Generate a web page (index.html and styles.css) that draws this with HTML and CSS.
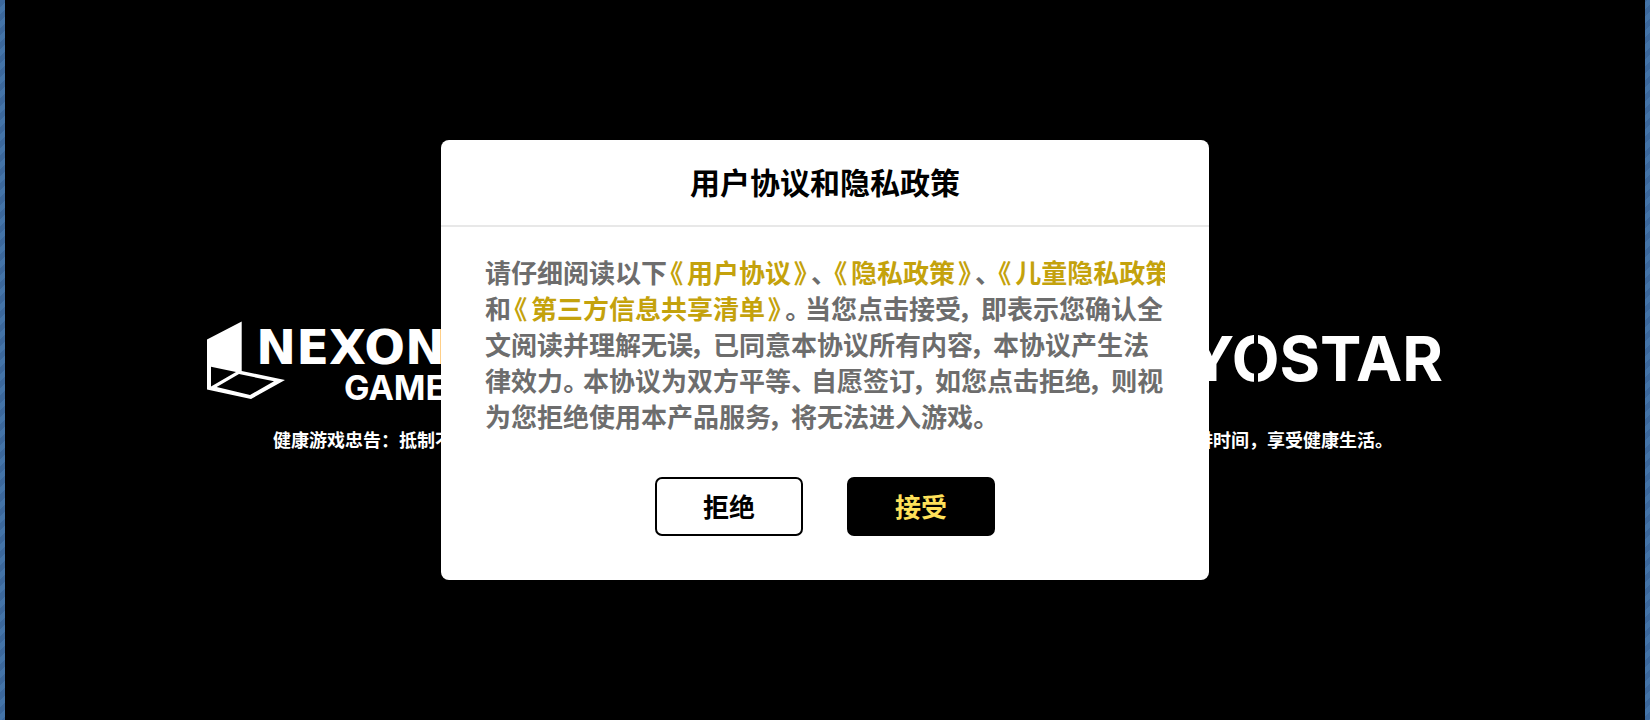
FILE: index.html
```html
<!DOCTYPE html>
<html lang="zh-CN">
<head>
	<meta charset="UTF-8">
	<title>用户协议和隐私政策</title>
	<link rel="stylesheet" href="styles.css">
</head>
<body>
	<main class="splash">
		<div class="brands">
			<svg class="brand-nexon" width="260" height="84" viewBox="0 0 260 84" role="img" aria-label="NEXON GAMES">
				<path fill-rule="evenodd" d="M0 19.5 L34.7 1.5 V51 L78 60 L44 79 L0 69.5 Z M4 46.7 V66.5 L29 52 Z M32 54 L9.7 67 L43 75 L67 61.3 Z"/>
				<text class="word-nexon" x="49" y="44">NEXON</text>
				<text class="word-games" x="137" y="80">GAMES</text>
			</svg>
			<svg class="brand-yostar" width="262" height="84" viewBox="0 0 262 84" role="img" aria-label="YOSTAR">
				<text class="word-yostar" x="262" y="61" text-anchor="end">YOSTAR</text>
				<!-- split in the top and bottom of the O -->
				<path class="cut" d="M75 12 V66"/>
			</svg>
		</div>
		<p class="tips">
			<span>健康游戏忠告：抵制不良游戏，</span>
			<span>合理安排时间，享受健康生活。</span>
		</p>
	</main>

	<div class="overlay">
		<div class="modal" role="dialog" aria-modal="true" aria-labelledby="modal-title">
			<h1 class="modal-title" id="modal-title">用户协议和隐私政策</h1>
			<div class="modal-body">
				<p class="agreement">
					请仔细阅读以下<a href="#user"><span class="bracket">《</span>用户协议<span class="bracket">》</span></a><span class="mark">、</span><a href="#privacy"><span class="bracket">《</span>隐私政策<span class="bracket">》</span></a><span class="mark">、</span><a href="#children"><span class="bracket">《</span>儿童隐私政策》</a><br>
					和<a href="#share"><span class="bracket">《</span>第三方信息共享清单<span class="bracket">》</span></a><span class="mark">。</span>当您点击接受<span class="mark">，</span>即表示您确认全<br>
					文阅读并理解无误<span class="mark">，</span>已同意本协议所有内容<span class="mark">，</span>本协议产生法<br>
					律效力<span class="mark">。</span>本协议为双方平等<span class="mark">、</span>自愿签订<span class="mark">，</span>如您点击拒绝<span class="mark">，</span>则视<br>
					为您拒绝使用本产品服务<span class="mark">，</span>将无法进入游戏。
				</p>
				<div class="buttons">
					<button class="btn" type="button">拒绝</button>
					<button class="btn btn-accept" type="button">接受</button>
				</div>
			</div>
		</div>
	</div>
</body>
</html>
```
FILE: styles.css
```css
* {
	box-sizing: border-box;
}

body {
	margin: 0;
	padding: 0 5px;
	font-family: "Noto Sans CJK SC", sans-serif;
	background: repeating-linear-gradient(135deg, #3c689c 0 5px, #4474a8 5px 10px);
}

.splash {
	display: flex;
	flex-direction: column;
	justify-content: center;
	min-height: 100vh;
	padding-top: 51px;
	background-color: #000;
	color: #fff;
}

.brands {
	display: flex;
	justify-content: space-between;
	padding: 0 202px;
}

.brands svg {
	fill: #fff;
}

.word-nexon {
	font: bold 48px "DejaVu Sans", sans-serif;
}

.word-games {
	font: bold 34px Inter, sans-serif;
}

.word-yostar {
	font: bold 62px Inter, sans-serif;
}

.cut {
	fill: none;
	stroke: #000;
	stroke-width: 4;
}

.tips {
	display: flex;
	justify-content: space-between;
	margin: 23px 0 0;
	padding: 0 252px 0 268px;
	font-size: 18px;
	font-weight: bold;
	line-height: 24px;
}

.overlay {
	position: fixed;
	inset: 0;
	display: flex;
	justify-content: center;
	align-items: center;
}

.modal {
	width: 768px;
	max-width: 100%;
	border-radius: 8px;
	background-color: #fff;
}

.modal-title {
	margin: 0;
	padding: 21px 0 24px;
	border-bottom: 2px solid #e8e8e8;
	color: #000;
	font-size: 30px;
	line-height: 40px;
	text-align: center;
}

.modal-body {
	padding: 27px 44px 44px;
}

.agreement {
	margin: 0;
	overflow: hidden;
	color: #6d6d6d;
	font-size: 26px;
	font-weight: bold;
	font-feature-settings: "palt";
	line-height: 36px;
	white-space: nowrap;
}

.agreement a {
	color: #c4a20c;
	text-decoration: none;
}

.mark {
	margin-right: 7px;
}

.bracket {
	margin: 0 4px 0 3px;
}

.buttons {
	display: flex;
	justify-content: center;
	gap: 44px;
	margin-top: 43px;
}

.btn {
	width: 148px;
	height: 59px;
	padding: 0 0 2px;
	border: 2px solid #000;
	border-radius: 7px;
	background-color: #fff;
	color: #000;
	font-family: inherit;
	font-size: 26px;
	font-weight: bold;
	cursor: pointer;
}

.btn-accept {
	background-color: #000;
	color: #ffe15a;
}
```
